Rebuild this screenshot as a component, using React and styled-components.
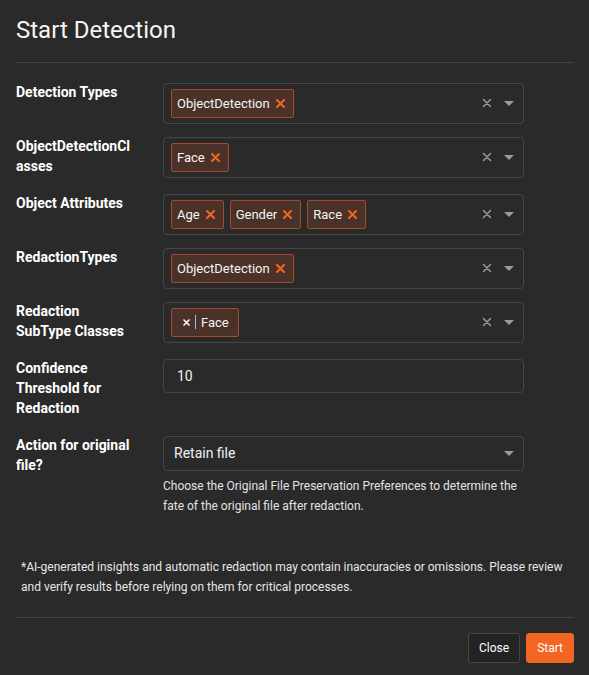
import React from "react";
import styled, { createGlobalStyle } from "styled-components";

const GlobalStyle = createGlobalStyle`
  * { box-sizing: border-box; }
  html, body {
    margin: 0;
    padding: 0;
    background: #2a2a2a;
    font-family: Roboto, "Liberation Sans", Arial, sans-serif;
    color: #f2f2f2;
  }
`;

const Modal = styled.div`
  min-height: 100vh;
  background: #2a2a2a;
`;

const Header = styled.div`
  padding: 16px 16px 17px;
`;

const Title = styled.h1`
  margin: 0;
  font-size: 24px;
  font-weight: 400;
  line-height: 1.2;
  color: #f5f5f5;
`;

const Divider = styled.div`
  height: 1px;
  margin: 0 16px;
  background: #454545;
`;

const Body = styled.div`
  padding: 20px 16px;
`;

const Row = styled.div`
  display: grid;
  grid-template-columns: 118px 361px;
  column-gap: 29px;
  align-items: start;
  margin-bottom: 13px;
`;

const Label = styled.label`
  margin-top: -1px;
  padding-bottom: 5px;
  font-size: 14px;
  font-weight: 700;
  line-height: 20px;
  color: #ffffff;
  overflow-wrap: anywhere;
`;

const Field = styled.div`
  display: flex;
  flex-direction: column;
`;

const SelectBox = styled.div`
  display: flex;
  align-items: center;
  min-height: ${(p) => (p.$single ? 35 : 41)}px;
  padding: ${(p) => (p.$single ? "0 9px 0 10px" : "5px 7px")};
  border: 1px solid #474747;
  border-radius: 4px;
  background: #2a2a2a;
`;

const Chips = styled.div`
  display: flex;
  flex-wrap: wrap;
  gap: 6px;
  flex: 1;
`;

const Chip = styled.span`
  display: inline-flex;
  align-items: center;
  height: 29px;
  padding-left: 5px;
  padding-right: ${(p) => (p.$lead ? 9 : 0)}px;
  border: 1px solid #a54a2a;
  border-radius: 2px;
  background: #4a3228;
  font-size: 13px;
  color: #f5f5f5;
`;

const ChipRemove = styled.span`
  display: inline-flex;
  margin: 0 8px 0 6px;
  color: #f26522;
`;

const LeadRemove = styled.span`
  display: inline-flex;
  align-items: center;
  height: 14px;
  padding: 0 5px 0 6px;
  margin-right: 5px;
  border-right: 1px solid #8cc4ec;
  color: #ffffff;
`;

const Indicators = styled.div`
  display: flex;
  align-items: center;
  gap: 12px;
  margin-left: auto;
  margin-right: 2px;
`;

const Value = styled.span`
  flex: 1;
  font-size: 14px;
  color: #f2f2f2;
`;

const Input = styled.input`
  height: 34px;
  width: 100%;
  padding: 0 13px;
  border: 1px solid #474747;
  border-radius: 4px;
  background: #2a2a2a;
  color: #f2f2f2;
  font-family: inherit;
  font-size: 14px;
  outline: none;
`;

const Help = styled.p`
  margin: 5px 0 0;
  font-size: 12px;
  line-height: 20px;
  color: #e2e2e2;
`;

const Disclaimer = styled.p`
  margin: 41px 0 0 5px;
  font-size: 12px;
  line-height: 20px;
  color: #e6e6e6;
`;

const Footer = styled.div`
  display: flex;
  justify-content: flex-end;
  gap: 6px;
  padding: 15px 15px;
`;

const Button = styled.button`
  height: 30px;
  padding: 0 10px;
  border: 1px solid ${(p) => (p.$primary ? "#f26522" : "#474747")};
  border-radius: 3px;
  background: ${(p) => (p.$primary ? "#f26522" : "#232323")};
  color: #ffffff;
  font-family: inherit;
  font-size: 12px;
  cursor: pointer;
`;

const OrangeX = () => (
  <svg width="9" height="9" viewBox="0 0 9 9">
    <path d="M1 1 L8 8 M8 1 L1 8" stroke="currentColor" strokeWidth="2" strokeLinecap="round" />
  </svg>
);

const SmallX = () => (
  <svg width="7" height="7" viewBox="0 0 7 7">
    <path d="M1 1 L6 6 M6 1 L1 6" stroke="currentColor" strokeWidth="1.6" strokeLinecap="round" />
  </svg>
);

const ClearIcon = () => (
  <svg width="10" height="10" viewBox="0 0 10 10">
    <path d="M1.5 1.5 L8.5 8.5 M8.5 1.5 L1.5 8.5" stroke="#9a9a9a" strokeWidth="1.5" strokeLinecap="round" />
  </svg>
);

const Caret = () => (
  <svg width="10" height="5" viewBox="0 0 10 5">
    <path d="M0 0 L10 0 L5 5 Z" fill="#9a9a9a" />
  </svg>
);

const MultiSelect = ({ values, lead }) => (
  <SelectBox>
    <Chips>
      {values.map((v) =>
        lead ? (
          <Chip key={v} $lead>
            <LeadRemove>
              <SmallX />
            </LeadRemove>
            {v}
          </Chip>
        ) : (
          <Chip key={v}>
            {v}
            <ChipRemove>
              <OrangeX />
            </ChipRemove>
          </Chip>
        )
      )}
    </Chips>
    <Indicators>
      <ClearIcon />
      <Caret />
    </Indicators>
  </SelectBox>
);

export default function App() {
  return (
    <Modal>
      <GlobalStyle />
      <Header>
        <Title>Start Detection</Title>
      </Header>
      <Divider />
      <Body>
        <Row>
          <Label>Detection Types</Label>
          <MultiSelect values={["ObjectDetection"]} />
        </Row>
        <Row>
          <Label>ObjectDetectionClasses</Label>
          <MultiSelect values={["Face"]} />
        </Row>
        <Row>
          <Label>Object Attributes</Label>
          <MultiSelect values={["Age", "Gender", "Race"]} />
        </Row>
        <Row>
          <Label>RedactionTypes</Label>
          <MultiSelect values={["ObjectDetection"]} />
        </Row>
        <Row>
          <Label>Redaction SubType Classes</Label>
          <MultiSelect values={["Face"]} lead />
        </Row>
        <Row>
          <Label>Confidence Threshold for Redaction</Label>
          <Input defaultValue="10" />
        </Row>
        <Row>
          <Label>Action for original file?</Label>
          <Field>
            <SelectBox $single>
              <Value>Retain file</Value>
              <Caret />
            </SelectBox>
            <Help>
              Choose the Original File Preservation Preferences to determine the fate of the
              original file after redaction.
            </Help>
          </Field>
        </Row>
        <Disclaimer>
          *AI-generated insights and automatic redaction may contain inaccuracies or omissions.
          Please review and verify results before relying on them for critical processes.
        </Disclaimer>
      </Body>
      <Divider />
      <Footer>
        <Button>Close</Button>
        <Button $primary>Start</Button>
      </Footer>
    </Modal>
  );
}
